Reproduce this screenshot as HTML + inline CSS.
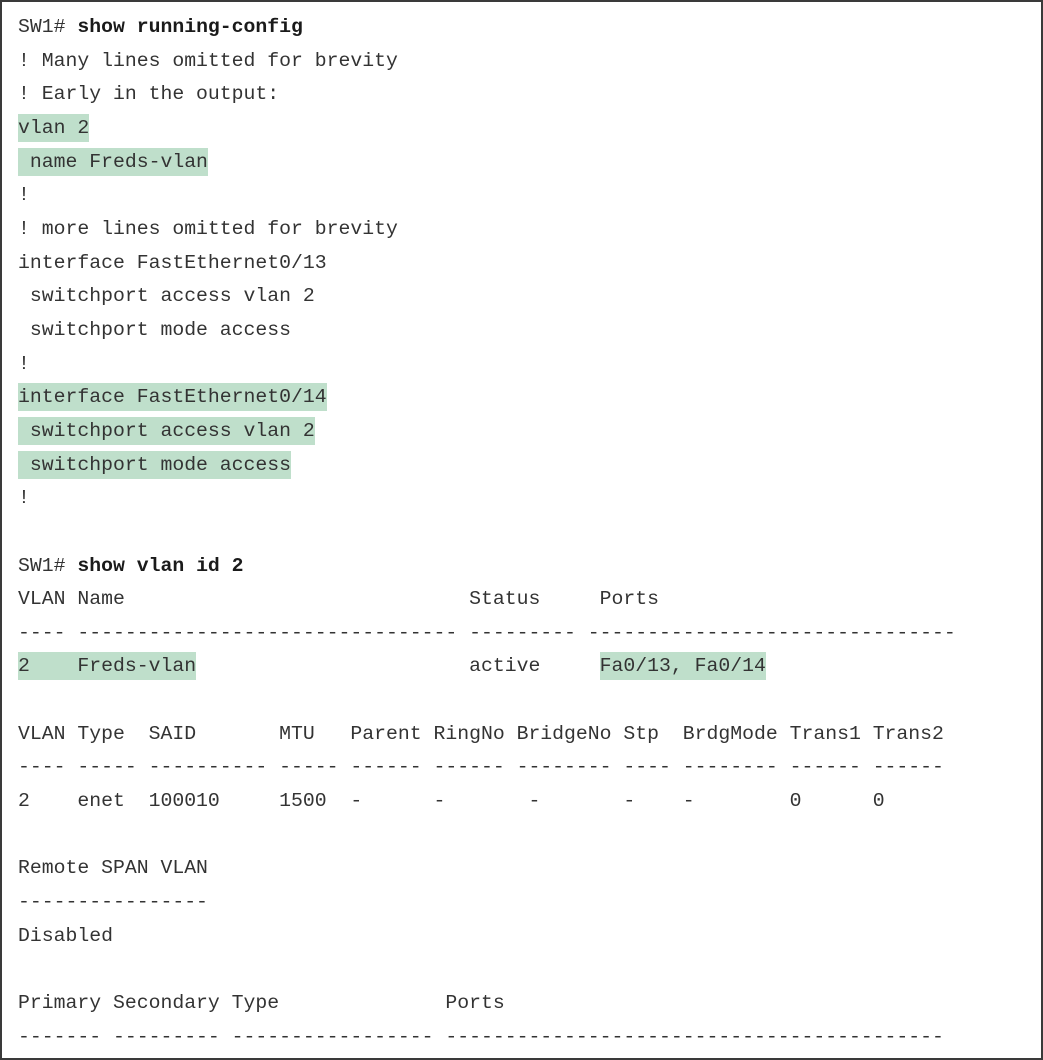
<!DOCTYPE html>
<html><head><meta charset="utf-8"><style>
html,body{margin:0;padding:0;background:#fff;}
.box{position:absolute;left:0;top:0;width:1039px;height:1056px;border:2px solid #3a3a3a;overflow:hidden;}
pre{margin:0;position:absolute;left:16px;top:9px;font-family:"Liberation Mono",monospace;font-size:19.8px;line-height:33.65px;color:#333;}
b{font-weight:bold;color:#1a1a1a;}
.h{background:#bfdfcb;padding:3px 0;}
</style></head><body><div class="box"><pre>SW1# <b>show running-config</b>
! Many lines omitted for brevity
! Early in the output:
<span class="h">vlan 2</span>
<span class="h"> name Freds-vlan</span>
!
! more lines omitted for brevity
interface FastEthernet0/13
 switchport access vlan 2
 switchport mode access
!
<span class="h">interface FastEthernet0/14</span>
<span class="h"> switchport access vlan 2</span>
<span class="h"> switchport mode access</span>
!

SW1# <b>show vlan id 2</b>
VLAN Name                             Status     Ports
---- -------------------------------- --------- -------------------------------
<span class="h">2    Freds-vlan</span>                       active     <span class="h">Fa0/13, Fa0/14</span>

VLAN Type  SAID       MTU   Parent RingNo BridgeNo Stp  BrdgMode Trans1 Trans2
---- ----- ---------- ----- ------ ------ -------- ---- -------- ------ ------
2    enet  100010     1500  -      -       -       -    -        0      0

Remote SPAN VLAN
----------------
Disabled

Primary Secondary Type              Ports
------- --------- ----------------- ------------------------------------------
</pre></div></body></html>
